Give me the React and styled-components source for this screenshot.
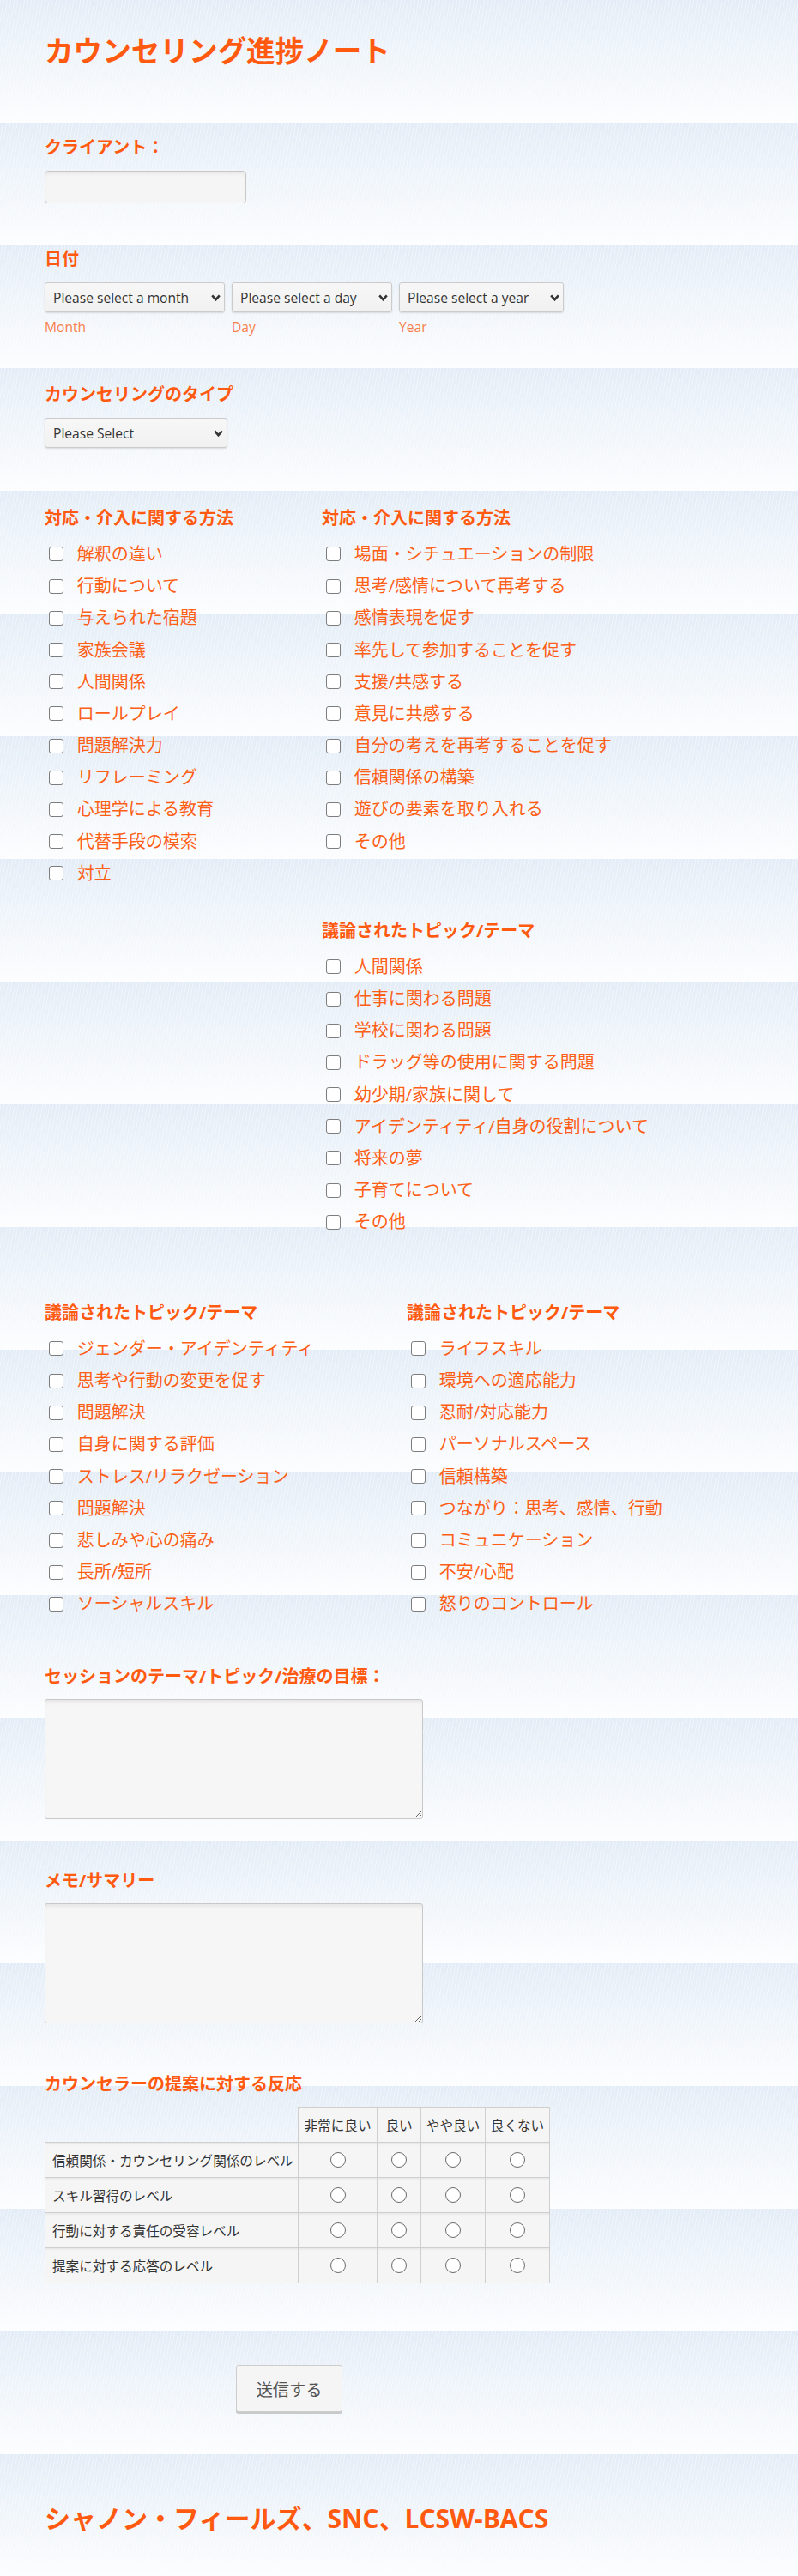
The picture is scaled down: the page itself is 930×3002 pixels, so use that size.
import React from 'react';
import styled, { createGlobalStyle } from 'styled-components';

const ORANGE = '#ff5a0f';

const methodsLeft = [
  '解釈の違い',
  '行動について',
  '与えられた宿題',
  '家族会議',
  '人間関係',
  'ロールプレイ',
  '問題解決力',
  'リフレーミング',
  '心理学による教育',
  '代替手段の模索',
  '対立',
];

const methodsRight = [
  '場面・シチュエーションの制限',
  '思考/感情について再考する',
  '感情表現を促す',
  '率先して参加することを促す',
  '支援/共感する',
  '意見に共感する',
  '自分の考えを再考することを促す',
  '信頼関係の構築',
  '遊びの要素を取り入れる',
  'その他',
];

const topicsA = [
  '人間関係',
  '仕事に関わる問題',
  '学校に関わる問題',
  'ドラッグ等の使用に関する問題',
  '幼少期/家族に関して',
  'アイデンティティ/自身の役割について',
  '将来の夢',
  '子育てについて',
  'その他',
];

const topicsB = [
  'ジェンダー・アイデンティティ',
  '思考や行動の変更を促す',
  '問題解決',
  '自身に関する評価',
  'ストレス/リラクゼーション',
  '問題解決',
  '悲しみや心の痛み',
  '長所/短所',
  'ソーシャルスキル',
];

const topicsC = [
  'ライフスキル',
  '環境への適応能力',
  '忍耐/対応能力',
  'パーソナルスペース',
  '信頼構築',
  'つながり：思考、感情、行動',
  'コミュニケーション',
  '不安/心配',
  '怒りのコントロール',
];

const scale = [
  { label: '非常に良い', w: 91 },
  { label: '良い', w: 50 },
  { label: 'やや良い', w: 74 },
  { label: '良くない', w: 74 },
];

const matrixRows = [
  '信頼関係・カウンセリング関係のレベル',
  'スキル習得のレベル',
  '行動に対する責任の受容レベル',
  '提案に対する応答のレベル',
];

const GlobalStyle = createGlobalStyle`
  html, body {
    margin: 0;
    padding: 0;
  }
  body {
    font-family: "Open Sans", "Noto Sans CJK JP", sans-serif;
    background-color: #ffffff;
    background-image:
      repeating-linear-gradient(100deg, rgba(255, 255, 255, 0.35) 0 1px, transparent 1px 4px),
      linear-gradient(to bottom, #e4edf7 0%, #eef4fa 40%, #fcfdfe 100%);
    background-size: auto, 100% 143px;
    background-repeat: repeat;
  }
`;

const Page = styled.div`
  display: flex;
  flex-direction: column;
  align-items: flex-start;
  padding: 39px 52px 54px;
`;

const Title = styled.h1`
  margin: 0;
  font-size: 33.6px;
  line-height: 40px;
  font-weight: 700;
  color: ${ORANGE};
`;

const Field = styled.div`
  margin-top: ${(p) => p.$top}px;
  display: flex;
  flex-direction: column;
  align-items: flex-start;
`;

const Label = styled.div`
  font-size: 20px;
  line-height: 24px;
  font-weight: 700;
  color: ${ORANGE};
  white-space: nowrap;
`;

const TextInput = styled.input`
  margin-top: 15px;
  width: 235px;
  height: 38px;
  box-sizing: border-box;
  background: #f5f5f5;
  border: 1px solid #c8c8c8;
  border-radius: 4px;
  box-shadow: inset 0 4px 4px -2px rgba(120, 100, 110, 0.12);
`;

const DateRow = styled.div`
  margin-top: 15px;
  display: flex;
  gap: 8px;
`;

const DatePart = styled.div`
  display: flex;
  flex-direction: column;
  align-items: flex-start;
`;

const SelectWrap = styled.div`
  position: relative;
  width: ${(p) => p.$w}px;
  margin-top: ${(p) => p.$top || 0}px;
`;

const Select = styled.select`
  appearance: none;
  width: 100%;
  height: 35px;
  box-sizing: border-box;
  padding: 0 22px 0 9px;
  font-family: "Open Sans", "Noto Sans CJK JP", sans-serif;
  font-size: 15.6px;
  color: #333;
  background: linear-gradient(to bottom, #f7f7f7, #f1f1f1);
  border: 1px solid #cbcbcb;
  border-radius: 3px;
  box-shadow: 0 1px 2px rgba(0, 0, 0, 0.12);
`;

const Chevron = styled.svg`
  position: absolute;
  right: ${(p) => p.$right}px;
  top: 14px;
  pointer-events: none;
`;

const SubLabel = styled.span`
  margin-top: 7px;
  font-size: 15.6px;
  line-height: 20px;
  color: #f8804c;
`;

const GroupGrid = styled.div`
  margin-top: ${(p) => p.$top}px;
  display: grid;
  grid-template-columns: ${(p) => p.$first}px auto;
  align-items: start;
`;

const Group = styled.div`
  grid-column: ${(p) => p.$col || 'auto'};
  grid-row: ${(p) => p.$row || 'auto'};
  margin-top: ${(p) => p.$top || 0}px;
`;

const CheckList = styled.div`
  margin-top: 11.4px;
  display: flex;
  flex-direction: column;
`;

const CheckRow = styled.label`
  height: 37.2px;
  display: flex;
  align-items: center;
  font-size: 20px;
  line-height: 24px;
  color: #fd5f17;
  white-space: nowrap;
`;

const Box = styled.input`
  appearance: none;
  width: 17px;
  height: 17px;
  margin: 0 15.7px 0 5px;
  box-sizing: border-box;
  border: 1.5px solid #7d7d7d;
  border-radius: 3px;
  background: #fff;
  flex-shrink: 0;
`;

const TextArea = styled.textarea`
  margin-top: 14px;
  width: 441px;
  height: 140px;
  box-sizing: border-box;
  background: #f6f6f6;
  border: 1px solid #c8c8c8;
  border-radius: 3px;
  box-shadow: inset 0 5px 5px -3px rgba(120, 100, 110, 0.14);
`;

const Matrix = styled.table`
  margin-top: 15px;
  border-collapse: collapse;
  font-size: 15.6px;
  color: #333;
`;

const Corner = styled.th`
  padding: 0;
  border: none;
  background: transparent;
`;

const HeadCell = styled.th`
  width: ${(p) => p.$w}px;
  height: 39px;
  padding: 0;
  font-weight: 400;
  text-align: center;
  white-space: nowrap;
  background: #f5f5f5;
  border: 1px solid #cfcfcf;
`;

const RowLabel = styled.td`
  width: 295px;
  height: 40px;
  box-sizing: border-box;
  padding: 0 0 0 8px;
  text-align: left;
  white-space: nowrap;
  background: #f5f5f5;
  border: 1px solid #cfcfcf;
  box-shadow: inset 0 3px 3px -2px rgba(0, 0, 0, 0.08);
`;

const RadioCell = styled.td`
  height: 40px;
  padding: 0;
  text-align: center;
  vertical-align: middle;
  background: #f5f5f5;
  border: 1px solid #cfcfcf;
  box-shadow: inset 0 3px 3px -2px rgba(0, 0, 0, 0.08);
`;

const Radio = styled.input`
  appearance: none;
  display: block;
  margin: 0 auto;
  width: 18px;
  height: 18px;
  box-sizing: border-box;
  border: 1.4px solid #6a6a6a;
  border-radius: 50%;
  background: #fff;
`;

const SubmitButton = styled.button`
  margin: 95px 0 0 223px;
  width: 124px;
  height: 55px;
  font-family: "Open Sans", "Noto Sans CJK JP", sans-serif;
  font-size: 19.2px;
  color: #555;
  background: #f5f5f5;
  border: 1px solid #cdcdcd;
  border-radius: 3px;
  box-shadow: 0 2px 0 #c9c9c9;
  cursor: pointer;
`;

const Footer = styled.h2`
  margin: 106px 0 0;
  font-size: 30px;
  line-height: 36px;
  font-weight: 700;
  color: ${ORANGE};
  white-space: nowrap;
`;

const ChevronIcon = ({ right }) => (
  <Chevron $right={right} width="11" height="8" viewBox="0 0 11 8">
    <path d="M1.2 1.4 L5.5 6.2 L9.8 1.4" fill="none" stroke="#333" strokeWidth="2.6" />
  </Chevron>
);

const SelectBox = ({ width, text, top }) => (
  <SelectWrap $w={width} $top={top}>
    <Select defaultValue="">
      <option value="">{text}</option>
    </Select>
    <ChevronIcon right={5} />
  </SelectWrap>
);

const CheckGroup = ({ title, items, col, row, top }) => (
  <Group $col={col} $row={row} $top={top}>
    <Label>{title}</Label>
    <CheckList>
      {items.map((item, i) => (
        <CheckRow key={i}>
          <Box type="checkbox" />
          <span>{item}</span>
        </CheckRow>
      ))}
    </CheckList>
  </Group>
);

const App = () => {
  return (
    <>
      <GlobalStyle />
      <Page>
        <Title>カウンセリング進捗ノート</Title>

        <Field $top={81}>
          <Label>クライアント：</Label>
          <TextInput type="text" />
        </Field>

        <Field $top={53}>
          <Label>日付</Label>
          <DateRow>
            <DatePart>
              <SelectBox width={210} text="Please select a month" />
              <SubLabel>Month</SubLabel>
            </DatePart>
            <DatePart>
              <SelectBox width={187} text="Please select a day" />
              <SubLabel>Day</SubLabel>
            </DatePart>
            <DatePart>
              <SelectBox width={192} text="Please select a year" />
              <SubLabel>Year</SubLabel>
            </DatePart>
          </DateRow>
        </Field>

        <Field $top={57}>
          <Label>カウンセリングのタイプ</Label>
          <SelectBox width={213} text="Please Select" top={15} />
        </Field>

        <GroupGrid $top={70} $first={323}>
          <CheckGroup title="対応・介入に関する方法" items={methodsLeft} col="1" row="1 / span 2" />
          <CheckGroup title="対応・介入に関する方法" items={methodsRight} col="2" row="1" />
          <CheckGroup title="議論されたトピック/テーマ" items={topicsA} col="2" row="2" top={73.6} />
        </GroupGrid>

        <GroupGrid $top={75} $first={422}>
          <CheckGroup title="議論されたトピック/テーマ" items={topicsB} />
          <CheckGroup title="議論されたトピック/テーマ" items={topicsC} />
        </GroupGrid>

        <Field $top={54}>
          <Label>セッションのテーマ/トピック/治療の目標：</Label>
          <TextArea />
        </Field>

        <Field $top={60}>
          <Label>メモ/サマリー</Label>
          <TextArea />
        </Field>

        <Field $top={59}>
          <Label>カウンセラーの提案に対する反応</Label>
          <Matrix>
            <thead>
              <tr>
                <Corner />
                {scale.map((s) => (
                  <HeadCell key={s.label} $w={s.w}>{s.label}</HeadCell>
                ))}
              </tr>
            </thead>
            <tbody>
              {matrixRows.map((row) => (
                <tr key={row}>
                  <RowLabel>{row}</RowLabel>
                  {scale.map((s) => (
                    <RadioCell key={s.label}>
                      <Radio type="radio" name={row} />
                    </RadioCell>
                  ))}
                </tr>
              ))}
            </tbody>
          </Matrix>
        </Field>

        <SubmitButton type="button">送信する</SubmitButton>

        <Footer>シャノン・フィールズ、SNC、LCSW-BACS</Footer>
      </Page>
    </>
  );
};

export default App;
